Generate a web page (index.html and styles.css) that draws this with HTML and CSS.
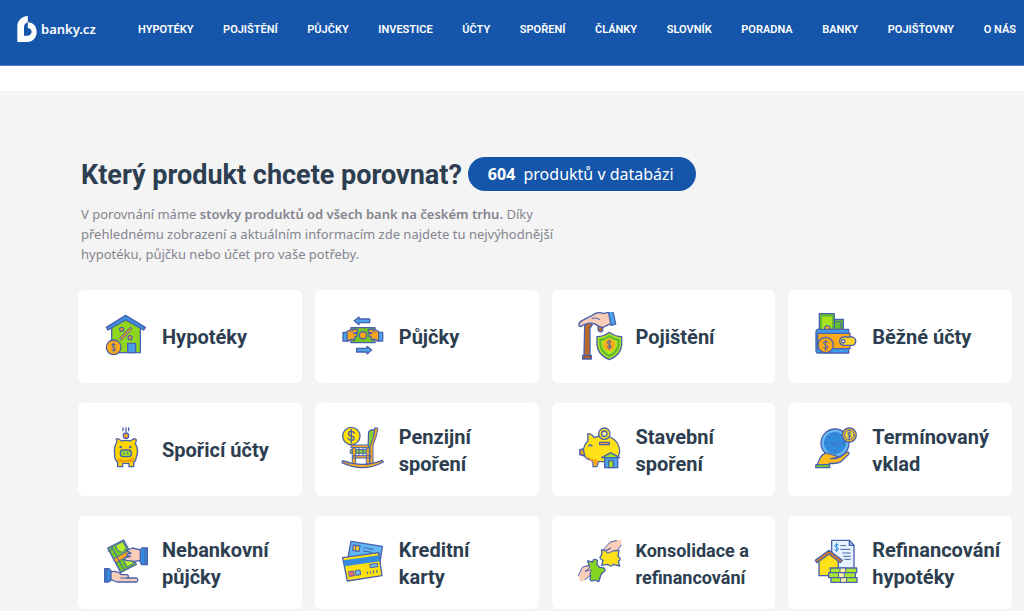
FILE: index.html
```html
<!DOCTYPE html>
<html lang="cs">
<head>
    <meta charset="UTF-8">
    <meta name="viewport" content="width=device-width, initial-scale=1.0">
    <title>banky.cz</title>
    <link rel="stylesheet" href="styles.css">
</head>
<body>
    <header class="header">
        <a class="logo" href="#">
            <svg class="logo-mark" viewBox="50 39 63 84" aria-hidden="true">
                <path fill="#fff" d="M84 40V60C102 60 112 74 112 90C112 109 100 122 82 122H51V74C51 54 64 41 84 40Z"/>
                <path fill="#1656aa" d="M84 60C77 62 72 68 72 76V102H84C91 102 96 97 96 90C96 83 92 79 84 78Z"/>
            </svg>
            <span>banky.cz</span>
        </a>
        <nav class="nav">
            <a href="#">HYPOTÉKY</a>
            <a href="#">POJIŠTĚNÍ</a>
            <a href="#">PŮJČKY</a>
            <a href="#">INVESTICE</a>
            <a href="#">ÚČTY</a>
            <a href="#">SPOŘENÍ</a>
            <a href="#">ČLÁNKY</a>
            <a href="#">SLOVNÍK</a>
            <a href="#">PORADNA</a>
            <a href="#">BANKY</a>
            <a href="#">POJIŠŤOVNY</a>
            <a href="#">O NÁS</a>
        </nav>
    </header>

    <main class="products">
        <div class="title-row">
            <h1>Který produkt chcete porovnat?</h1>
            <p class="count"><strong>604</strong> produktů v databázi</p>
        </div>
        <p class="intro">V porovnání máme <strong>stovky produktů od všech bank na českém trhu.</strong> Díky přehlednému zobrazení a aktuálním informacím zde najdete tu nejvýhodnější hypotéku, půjčku nebo účet pro vaše potřeby.</p>

        <div class="grid">
            <a class="card" href="#">
                <!-- house with coin -->
                <svg class="icon" viewBox="24 20 150 150" aria-hidden="true">
                    <path fill="#8fd61c" d="M50 62L92 38L136 62V142H50Z"/>
                    <path fill="#3f8fdf" d="M34 66L92 30L151 66L146 74L92 44L39 74Z"/>
                    <path fill="#4a9ae6" d="M98 114H122V142H98Z"/>
                    <path stroke="#4a62ae" stroke-width="9" d="M78 100L107 70"/>
                    <path stroke="#f9a51a" stroke-width="4" d="M78 100L107 70"/>
                    <circle fill="#f9a51a" cx="80" cy="72" r="6"/>
                    <circle fill="#f9a51a" cx="105" cy="97" r="6"/>
                    <circle fill="#fba919" cx="56" cy="126" r="22"/>
                    <path class="thin" d="M62 119Q56 113 51 118Q50 124 56 126Q63 128 61 134Q56 139 50 133M56 112V140"/>
                </svg>
                <span>Hypotéky</span>
            </a>
            <a class="card" href="#">
                <!-- banknote passed between two hands -->
                <svg class="icon" viewBox="15 20 150 150" aria-hidden="true">
                    <path fill="#4aa5ec" d="M58 46L72 35V41H104V52H72V58Z"/>
                    <path fill="#4aa5ec" d="M110 134L96 123V129H65V140H96V146Z"/>
                    <path fill="#4aa5ec" d="M24 81H42V107H24ZM126 81H143V107H126Z"/>
                    <path fill="#78c81e" d="M48 67H120V112H48Z"/>
                    <path fill="#f9a51a" d="M36 79L49 72H68V80L55 84H66V93H60V102H48L36 107ZM131 79L118 72H100V80L112 84H102V93H108V102H119L131 107Z"/>
                    <circle fill="#f9a51a" cx="84" cy="90" r="11"/>
                    <path class="thin" d="M48 80Q58 76 62 67M120 80Q110 76 106 67M48 102Q58 104 60 112M120 102Q110 104 108 112"/>
                </svg>
                <span>Půjčky</span>
            </a>
            <a class="card" href="#">
                <!-- hand on a cane and a shield -->
                <svg class="icon" viewBox="20 35 150 150" aria-hidden="true">
                    <path fill="#b96a29" d="M43 76Q54 63 66 72Q62 79 59 83V166H41ZM83 77H97V91Q90 98 84 91Z"/>
                    <path fill="#a65d25" d="M37 165H63V176H37Z"/>
                    <path fill="#f9cdb8" d="M26 76Q24 67 35 61L66 45Q82 32 100 40L116 35L123 69L98 81Q86 80 72 70Q53 64 30 79Z"/>
                    <path class="thin" d="M65 54Q77 50 88 57"/>
                    <path fill="#4aa5ec" d="M114 33L127 30L136 71L122 75Z"/>
                    <path fill="#b2e51e" d="M117 96Q134 109 154 109V133Q152 164 117 178Q82 164 80 133V109Q101 109 117 96Z"/>
                    <path fill="#5fb832" stroke="none" d="M117 103Q132 115 148 115V133Q145 158 117 171Q90 158 87 133V115Q103 115 117 103Z"/>
                    <path fill="#b2e51e" stroke="none" d="M117 111Q130 120 141 121V134Q138 153 117 163Q97 153 93 134V121Q105 120 117 111Z"/>
                    <circle fill="#fba919" stroke="none" cx="117" cy="133" r="18"/>
                    <path class="thin" d="M123 126Q117 120 111 125Q111 131 117 133Q124 135 122 141Q117 145 111 139M117 119V147"/>
                </svg>
                <span>Pojištění</span>
            </a>
            <a class="card" href="#">
                <!-- wallet -->
                <svg class="icon" viewBox="25 20 150 150" aria-hidden="true">
                    <path fill="#63bd32" d="M84 42H116V78H84Z"/>
                    <path class="thin" d="M92 49H109V70"/>
                    <path fill="#63bd32" d="M44 25H89V76H44Z"/>
                    <path fill="#a8e322" stroke="none" d="M52 34H82V76H52Z"/>
                    <path fill="#fba919" d="M60 76V66Q68 56 76 66V76Z"/>
                    <path fill="#3f9be8" d="M34 78Q37 69 46 72H132V143H39Q34 142 34 136Z"/>
                    <path fill="#fba919" d="M39 84H136V130H39Z"/>
                    <circle fill="#fba919" cx="63" cy="119" r="23"/>
                    <path class="thin" d="M70 111Q63 104 57 110Q56 117 63 119Q71 121 69 128Q63 133 56 126M63 103V136"/>
                    <path fill="#ffd52b" d="M116 95H144Q154 99 153 108Q152 118 144 120H116Q105 117 105 108Q105 98 116 95Z"/>
                    <circle fill="#fff" cx="116" cy="108" r="5"/>
                </svg>
                <span>Běžné účty</span>
            </a>
            <a class="card" href="#">
                <!-- front-facing piggy bank -->
                <svg class="icon" viewBox="24 14 150 150" aria-hidden="true">
                    <path d="M84 23V31M93 23V34M101 23V31"/>
                    <circle fill="#fba919" cx="93" cy="46" r="8"/>
                    <path fill="#fed500" d="M66 65Q60 51 71 56L80 62Q93 58 106 62L117 55Q128 54 121 70Q133 89 124 110Q123 122 116 126V139H102V129H83V139H68V126Q58 118 59 102Q56 80 66 65Z"/>
                    <path fill="#fba000" stroke="none" d="M69 112Q90 127 116 111Q120 121 112 125H73Q66 121 69 112Z"/>
                    <circle fill="#4a62ae" stroke="none" cx="77" cy="80" r="4"/>
                    <circle fill="#4a62ae" stroke="none" cx="106" cy="80" r="4"/>
                    <rect fill="#9bd62b" x="76" y="89" width="33" height="20" rx="8"/>
                    <path class="thin" d="M87 97V101M98 97V101"/>
                </svg>
                <span>Spořicí účty</span>
            </a>
            <a class="card" href="#">
                <!-- rocking chair with coin -->
                <svg class="icon" viewBox="15 14 150 150" aria-hidden="true">
                    <circle fill="#ffe200" cx="49" cy="47" r="26"/>
                    <path d="M58 38Q49 29 41 36Q38 45 49 47Q61 50 56 58Q47 64 39 54M49 27V67"/>
                    <path fill="#8bcf2f" d="M101 34Q111 24 119 31L110 85H99Z"/>
                    <path class="thin" fill="#8bcf2f" d="M47 88H103V99H47Z"/>
                    <path class="thin" fill="#f7ab21" d="M120 23H129Q125 51 114 75V130H105V78Q119 51 120 23ZM49 74H101V82H49ZM53 82H62V131H53ZM95 82H103V130H95ZM56 106H107V113H56Z"/>
                    <path class="thin" d="M72 82V105M84 82V105"/>
                    <path fill="#f7ab21" d="M23 121Q82 144 142 120L145 125Q85 158 21 127Z"/>
                </svg>
                <span>Penzijní spoření</span>
            </a>
            <a class="card" href="#">
                <!-- piggy bank with house -->
                <svg class="icon" viewBox="20 14 150 150" aria-hidden="true">
                    <path fill="#ffe119" d="M53 61L52 41Q63 39 72 52Q100 40 125 53Q148 67 148 94Q145 116 128 119L123 134H108V124H84L80 139H68V128L63 119Q48 118 43 107L29 103V88L40 85Q43 70 53 61Z"/>
                    <path fill="#f9a51a" stroke="none" d="M48 107Q63 117 83 119L78 136H70V124Q56 120 48 107Z"/>
                    <path fill="#f9a51a" d="M29 88L39 88L43 105L29 103Z"/>
                    <path d="M55 77Q60 71 65 77"/>
                    <circle fill="#ffe119" cx="102" cy="40" r="17"/>
                    <circle fill="#fff5ad" cx="102" cy="40" r="8"/>
                    <path fill="#f9a51a" d="M88 66H117V73H88Z"/>
                    <path fill="#4da4ed" d="M103 112H142V142H103Z"/>
                    <path fill="#9be31f" d="M94 112L121 97L148 112Z"/>
                    <path fill="#9be31f" d="M115 121H129V142H115Z"/>
                </svg>
                <span>Stavební spoření</span>
            </a>
            <a class="card" href="#">
                <!-- clock held in a hand -->
                <svg class="icon" viewBox="730 14 150 150" aria-hidden="true">
                    <circle fill="#69b8f5" cx="796" cy="68" r="42"/>
                    <circle fill="#328ade" cx="796" cy="68" r="33" stroke="none"/>
                    <path class="thin" d="M785 65L796 75L809 63M796 39V45M767 68H773M819 68H825M796 91V97M776 48L780 52"/>
                    <circle fill="#fbb51c" cx="839" cy="44" r="21"/>
                    <circle class="thin" fill="#ffe03c" cx="839" cy="44" r="14"/>
                    <path class="thin" d="M844 39Q839 34 834 38Q834 43 839 44Q846 46 843 50Q838 54 834 49M839 32V56"/>
                    <path fill="#ffbd1d" d="M742 134L753 110Q765 94 777 100L798 106Q808 111 800 115H783L812 110L832 95Q840 94 837 102L814 124Q803 131 779 129L775 140Z"/>
                    <path fill="#75cc32" d="M739 133H780V142H738Z"/>
                </svg>
                <span>Termínovaný vklad</span>
            </a>
            <a class="card" href="#">
                <!-- money handed over -->
                <svg class="icon" viewBox="24 21 150 150" aria-hidden="true">
                    <path fill="#70c82a" d="M38 51L86 27L124 100L77 124Z"/>
                    <path class="thin" fill="#b7ed32" d="M62 43L83 32L94 51L82 65L68 58ZM86 85L105 75L116 97L97 108Z"/>
                    <path class="thin" fill="#f9a51a" d="M56 83L99 60L106 70L64 95Z"/>
                    <path class="thin" d="M50 47L88 119M39 61Q51 59 53 47"/>
                    <path fill="#f9cdb8" d="M94 58L112 51L142 58V87L120 91L93 88Q84 83 94 79L107 76Q94 75 96 69L108 67Z"/>
                    <path fill="#358bdd" d="M140 51H157V101H140L136 93V58Z"/>
                    <path fill="#358bdd" d="M29 113H42L48 120V148L40 153H29Z"/>
                    <path fill="#f9cdb8" d="M48 122Q67 118 80 131H96Q105 136 96 141H124Q133 146 125 153H66L48 146Z"/>
                    <path class="thin" d="M77 141H96M150 52V100M35 115V152"/>
                </svg>
                <span>Nebankovní půjčky</span>
            </a>
            <a class="card" href="#">
                <!-- two payment cards -->
                <svg class="icon" viewBox="735 21 150 150" aria-hidden="true">
                    <path fill="#63b7f3" d="M768 31L862 46L854 102L758 86Z"/>
                    <path fill="#ffd119" d="M775 42L795 45L792 61L773 58Z"/>
                    <path class="thin" d="M783 44L781 59M807 50L835 55M805 60L830 64M840 67L856 70"/>
                    <path fill="#ffe00f" d="M743 80L851 65L861 134L757 150Z"/>
                    <path fill="#348be0" stroke="none" d="M746 88L852 73L855 91L749 106Z"/>
                    <path class="thin" fill="#f36b73" d="M762 122L776 120L778 134L764 136Z"/>
                    <path class="thin" fill="#78b9ea" d="M782 119L795 117L797 131L784 133ZM825 100L847 97L848 107L827 110Z"/>
                    <path class="thin" d="M816 122L818 129M825 121L827 127M835 119L836 126M845 118L846 125"/>
                </svg>
                <span>Kreditní<br>karty</span>
            </a>
            <a class="card card-long" href="#">
                <!-- puzzle pieces joined by hands -->
                <svg class="icon" viewBox="20 21 150 150" aria-hidden="true">
                    <path fill="#ffe119" d="M94 56L108 60Q117 50 123 60L146 58L143 76Q156 83 144 91L148 105L128 100Q121 111 113 100L94 103L98 88Q82 81 94 72Z"/>
                    <path fill="#f9cdb8" stroke="none" d="M104 52L120 33L139 27H153V40L143 54L132 61L115 65L105 63Z"/>
                    <path class="thin" d="M153 42L141 58L130 59L115 66Q108 68 107 61L121 51L104 60Q98 57 104 50L120 33L138 29"/>
                    <path fill="#84d721" d="M52 90L67 93Q69 80 81 88L80 101L88 109Q106 108 104 120Q94 126 92 131L85 152L73 147Q64 153 59 146L61 133L46 126Q51 118 44 109L57 106Z"/>
                    <path fill="#f9cdb8" stroke="none" d="M25 135L39 109L56 105L62 118L58 133L43 147L30 153Z"/>
                    <path class="thin" d="M24 134L37 108L54 103Q62 107 54 114L44 121L61 116Q66 122 58 127L61 132L44 146"/>
                </svg>
                <span>Konsolidace a refinancování</span>
            </a>
            <a class="card" href="#">
                <!-- house, contract and banknotes -->
                <svg class="icon" viewBox="730 21 150 150" aria-hidden="true">
                    <path fill="#e7f3ff" d="M786 28H839L853 43V116H786Z"/>
                    <path fill="#a9d1fa" d="M839 28V43H853Z"/>
                    <path class="thin dollar" d="M806 42Q800 36 796 42Q795 48 801 49Q808 51 805 57Q800 62 795 56M801 36V62"/>
                    <path class="thin" d="M813 44H828M813 55H841M819 66H842M822 76H842M825 85H842"/>
                    <path fill="#ffe119" d="M748 86L778 66L806 86V134H748Z"/>
                    <path fill="#d6792c" d="M737 88L778 58L818 88L812 95L778 69L742 95Z"/>
                    <path fill="#a9e72d" d="M782 111H861V125H782ZM777 125H857V140H777ZM784 140H862V154H784Z"/>
                    <path class="thin" fill="#fff3a8" d="M812 111H828V125H812ZM808 125H824V140H808ZM814 140H831V154H814Z"/>
                </svg>
                <span>Refinancování hypotéky</span>
            </a>
        </div>
    </main>
</body>
</html>
```
FILE: styles.css
```css
* { box-sizing: border-box; }
body { margin: 0; background: #f4f4f4; font-family: "Noto Sans", "Open Sans", sans-serif; color: #2c3e50; }
a { color: inherit; text-decoration: none; }
h1, p { margin: 0; }

.header { display: flex; align-items: center; height: 66px; padding: 0 8px 8px 17px; background: #1656aa; border-bottom: 1px solid #4a7fc6; color: #fff; }
.logo { display: flex; align-items: center; gap: 4px; width: 121px; font-size: 13px; font-weight: 600; }
.logo-mark { width: 20px; height: 28px; }
.nav { display: flex; flex: 1; justify-content: space-between; padding-top: 2px; font-family: Roboto, sans-serif; font-size: 11px; font-weight: 600; white-space: nowrap; }

.products { padding: 66px 12px 2px 78px; border-top: 25px solid #fff; }
.title-row { display: flex; align-items: center; gap: 6px; padding-left: 3px; }
h1 { padding-top: 2px; font-family: Roboto, sans-serif; font-size: 27px; font-weight: 700; line-height: 32px; }
.count { padding: 0 22px 0 20px; border-radius: 17px; background: #1656aa; color: #fff; font-size: 16px; line-height: 34px; }
.count strong { margin-right: 4px; font-weight: 700; }
.intro { max-width: 500px; margin-top: 13px; padding-left: 3px; color: #83848f; font-size: 13px; line-height: 20px; }
.intro strong { font-weight: 600; }

.grid { display: grid; grid-template-columns: repeat(4, 1fr); gap: 20px 13px; margin-top: 26px; }
.card { display: flex; align-items: center; gap: 9px; height: 93px; padding: 0 8px 0 25px; border-radius: 6px; background: #fff; font-family: Roboto, sans-serif; font-size: 20px; font-weight: 700; line-height: 27px; }
.card span { padding-top: 2px; }
.card-long { font-size: 18px; }

.icon { flex: none; width: 50px; height: 50px; fill: none; stroke: #4a62ae; stroke-width: 4; stroke-linejoin: round; stroke-linecap: round; }
.icon .thin { stroke-width: 3; }
.icon .dollar { stroke: #2f8fdf; }
```
